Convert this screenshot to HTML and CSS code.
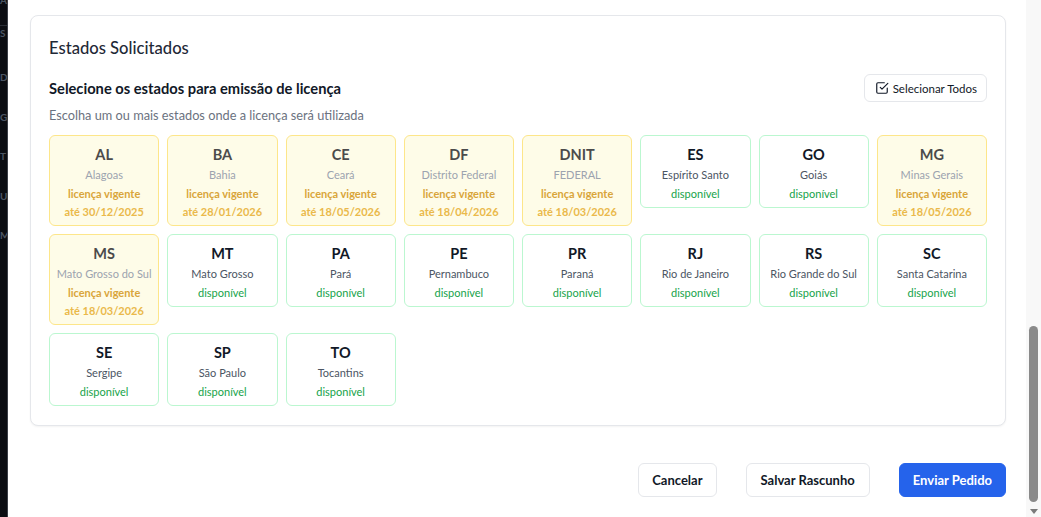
FILE: index.html
```html
<!DOCTYPE html>
<html lang="pt-BR">
<head>
<meta charset="utf-8">
<title>Estados Solicitados</title>
<link rel="stylesheet" href="styles.css">
</head>
<body>
<div class="app">
  <aside class="sidebar">
    <div class="nav-top">A</div>
    <div class="nav-sep"></div>
    <div class="nav-item nav-s">S</div>
    <div class="nav-item nav-d">D</div>
    <div class="nav-item">G</div>
    <div class="nav-item">T</div>
    <div class="nav-item">U</div>
    <div class="nav-item">M</div>
  </aside>
  <main class="main">
    <section class="panel">
      <h2 class="panel-title">Estados Solicitados</h2>
      <div class="panel-head">
        <h3 class="subtitle">Selecione os estados para emissão de licença</h3>
        <button class="btn-select">
          <svg width="14" height="14" viewBox="0 0 24 24" fill="none" stroke="currentColor" stroke-width="2" stroke-linecap="round" stroke-linejoin="round"><path d="M9 11l3 3L22 4"/><path d="M21 12v7a2 2 0 0 1-2 2H5a2 2 0 0 1-2-2V5a2 2 0 0 1 2-2h11"/></svg>
          Selecionar Todos
        </button>
      </div>
      <p class="hint">Escolha um ou mais estados onde a licença será utilizada</p>
      <div class="grid">
        <div class="st busy"><div class="code">AL</div><div class="name">Alagoas</div><div class="status">licença vigente</div><div class="date">até 30/12/2025</div></div>
        <div class="st busy"><div class="code">BA</div><div class="name">Bahia</div><div class="status">licença vigente</div><div class="date">até 28/01/2026</div></div>
        <div class="st busy"><div class="code">CE</div><div class="name">Ceará</div><div class="status">licença vigente</div><div class="date">até 18/05/2026</div></div>
        <div class="st busy"><div class="code">DF</div><div class="name">Distrito Federal</div><div class="status">licença vigente</div><div class="date">até 18/04/2026</div></div>
        <div class="st busy"><div class="code">DNIT</div><div class="name">FEDERAL</div><div class="status">licença vigente</div><div class="date">até 18/03/2026</div></div>
        <div class="st free"><div class="code">ES</div><div class="name">Espírito Santo</div><div class="status">disponível</div></div>
        <div class="st free"><div class="code">GO</div><div class="name">Goiás</div><div class="status">disponível</div></div>
        <div class="st busy"><div class="code">MG</div><div class="name">Minas Gerais</div><div class="status">licença vigente</div><div class="date">até 18/05/2026</div></div>
        <div class="st busy"><div class="code">MS</div><div class="name">Mato Grosso do Sul</div><div class="status">licença vigente</div><div class="date">até 18/03/2026</div></div>
        <div class="st free"><div class="code">MT</div><div class="name">Mato Grosso</div><div class="status">disponível</div></div>
        <div class="st free"><div class="code">PA</div><div class="name">Pará</div><div class="status">disponível</div></div>
        <div class="st free"><div class="code">PE</div><div class="name">Pernambuco</div><div class="status">disponível</div></div>
        <div class="st free"><div class="code">PR</div><div class="name">Paraná</div><div class="status">disponível</div></div>
        <div class="st free"><div class="code">RJ</div><div class="name">Rio de Janeiro</div><div class="status">disponível</div></div>
        <div class="st free"><div class="code">RS</div><div class="name">Rio Grande do Sul</div><div class="status">disponível</div></div>
        <div class="st free"><div class="code">SC</div><div class="name">Santa Catarina</div><div class="status">disponível</div></div>
        <div class="st free"><div class="code">SE</div><div class="name">Sergipe</div><div class="status">disponível</div></div>
        <div class="st free"><div class="code">SP</div><div class="name">São Paulo</div><div class="status">disponível</div></div>
        <div class="st free"><div class="code">TO</div><div class="name">Tocantins</div><div class="status">disponível</div></div>
      </div>
    </section>
    <div class="actions">
      <button class="btn btn-outline btn-cancel">Cancelar</button>
      <button class="btn btn-outline">Salvar Rascunho</button>
      <button class="btn btn-primary">Enviar Pedido</button>
    </div>
  </main>
  <div class="scrollbar">
    <div class="thumb"></div>
    <div class="arrow-down"></div>
  </div>
</div>
</body>
</html>
```
FILE: styles.css
```css
* { box-sizing: border-box; }
html, body { margin: 0; padding: 0; height: 100%; overflow: hidden; }
body {
  font-family: Lato, "Noto Sans", sans-serif;
  color: #111827;
  background: #fff;
}
.app { display: flex; height: 517px; }

.sidebar {
  width: 8px;
  flex: none;
  background: #0b0d12;
  border-right: 1px solid #3b3f47;
  overflow: hidden;
  color: #4b5563;
  font-size: 10px;
  font-weight: 700;
}
.nav-top { height: 4px; line-height: 0; }
.nav-sep { height: 1px; background: #2a2e36; margin-top: 21px; }
.nav-item { height: 39.5px; line-height: 39.5px; white-space: nowrap; }
.nav-s { height: 14px; line-height: 14px; }
.nav-d { margin-top: 18px; }

.main {
  flex: 1;
  display: flex;
  flex-direction: column;
  padding: 15px 20px 0 22px;
}

.panel {
  border: 1px solid #e5e7eb;
  border-radius: 8px;
  box-shadow: 0 1px 2px rgba(0,0,0,0.05);
  padding: 20px 18px 19px 18px;
  background: #fff;
}
.panel-title {
  margin: 0;
  font-size: 16.6px;
  line-height: 24px;
  font-weight: 500;
  color: #1f2937;
}
.panel-head {
  display: flex;
  align-items: center;
  justify-content: space-between;
  margin-top: 14px;
}
.subtitle {
  margin: 0;
  font-size: 14.7px;
  font-weight: 700;
  line-height: 20px;
  color: #111827;
}
.btn-select {
  display: flex;
  align-items: center;
  gap: 4px;
  height: 28px;
  padding: 0 9px 0 10px;
  border: 1px solid #e5e7eb;
  border-radius: 6px;
  background: #fff;
  font-family: inherit;
  font-size: 11.5px;
  color: #111827;
}
.hint {
  margin: 4px 0 0;
  font-size: 12.75px;
  line-height: 18px;
  color: #6b7280;
}
.grid {
  margin-top: 11px;
  display: grid;
  grid-template-columns: repeat(8, 1fr);
  gap: 8px;
  align-items: start;
}
.st {
  border: 1px solid;
  border-radius: 6px;
  padding: 9px 2px 4px;
  text-align: center;
  font-size: 11px;
  line-height: 18px;
  white-space: nowrap;
}
.st .code { font-size: 14.5px; font-weight: 700; line-height: 20px; margin-bottom: 1px; }
.st .name { margin-bottom: 1px; }
.st.busy { background: #fefce8; border-color: #fde68a; }
.st.busy .code { color: #4b4b4b; }
.st.busy .name { color: #9ca3af; }
.st.busy .status { color: #d9a53a; font-weight: 700; }
.st.busy .date { color: #eab94b; font-weight: 700; }
.st.free { background: #fff; border-color: #bbf7d0; }
.st.free .code { color: #111827; }
.st.free .name { color: #4b5563; }
.st.free .status { color: #16a34a; }

.actions {
  display: flex;
  justify-content: flex-end;
  gap: 29px;
  margin-top: 37px;
}
.btn {
  height: 34px;
  padding: 0 14px;
  border-radius: 6px;
  font-family: inherit;
  font-size: 13px;
  font-weight: 700;
}
.btn-outline { background: #fff; border: 1px solid #e5e7eb; color: #111827; }
.btn-cancel { padding: 0 13px; }
.btn-primary { background: #2563eb; border: 1px solid #2563eb; color: #fff; padding: 0 13px; }

.scrollbar {
  width: 15px;
  flex: none;
  background: #f8f8f8;
  display: flex;
  flex-direction: column;
  align-items: center;
}
.thumb {
  width: 9px;
  height: 176px;
  margin-top: 326px;
  background: #8a8a8a;
  border-radius: 5px;
}
.arrow-down {
  margin-top: 7px;
  width: 0;
  height: 0;
  border-left: 4px solid transparent;
  border-right: 4px solid transparent;
  border-top: 5px solid #7a7a7a;
}
```
